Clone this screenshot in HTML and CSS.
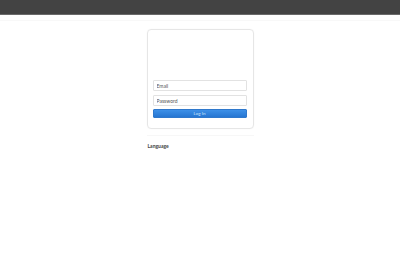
FILE: index.html
```html
<!DOCTYPE html>
<html>
<head>
<meta charset="utf-8">
<link rel="stylesheet" href="styles.css">
</head>
<body>
<div class="topbar"></div>
<div class="subbar"></div>
<main class="main">
  <div class="card">
    <div class="logo-area"></div>
    <form class="form">
      <input class="field" type="text" placeholder="Email">
      <input class="field" type="password" placeholder="Password">
      <button class="btn" type="button">Log In</button>
    </form>
  </div>
  <div class="divider"></div>
  <div class="lang">Language</div>
</main>
</body>
</html>
```
FILE: styles.css
```css
html, body { margin: 0; padding: 0; background: #fff; }
body { font-family: "Lato", "Liberation Sans", sans-serif; width: 400px; height: 279px; overflow: hidden; }
.topbar { height: 14px; background: #434343; border-bottom: 1px solid #6a6a6a; }
.subbar { height: 5px; border-bottom: 1px solid #f8f8f8; }
.main { width: 107px; margin: 8px auto 0; }
.card { box-sizing: border-box; width: 107px; height: 100px; border: 1px solid #e6e6e6; border-radius: 4px; box-shadow: 0 0 2px rgba(0,0,0,0.03); padding: 0 5px 0 6px; display: flex; flex-direction: column; }
.logo-area { height: 50px; }
.form { display: flex; flex-direction: column; gap: 4px; margin-left: -1px; }
.field { box-sizing: border-box; width: 94px; height: 11px; border: 1px solid #e2e2e2; border-radius: 1px; padding: 0 3px; font-family: inherit; font-size: 5px; color: #555; outline: none; }
.field::placeholder { color: #555; }
.btn { box-sizing: border-box; width: 94px; height: 9px; margin-top: -1px; border: 1px solid #2f78cc; border-radius: 1px; background: linear-gradient(#3d90e8, #2676d2); color: #cfe3fa; font-family: inherit; font-size: 4.5px; padding: 0; }
.divider { height: 1px; background: #f7f7f7; margin-top: 6px; }
.lang { margin-top: 7px; padding-left: 1px; font-size: 5px; font-weight: bold; color: #444; }
```
